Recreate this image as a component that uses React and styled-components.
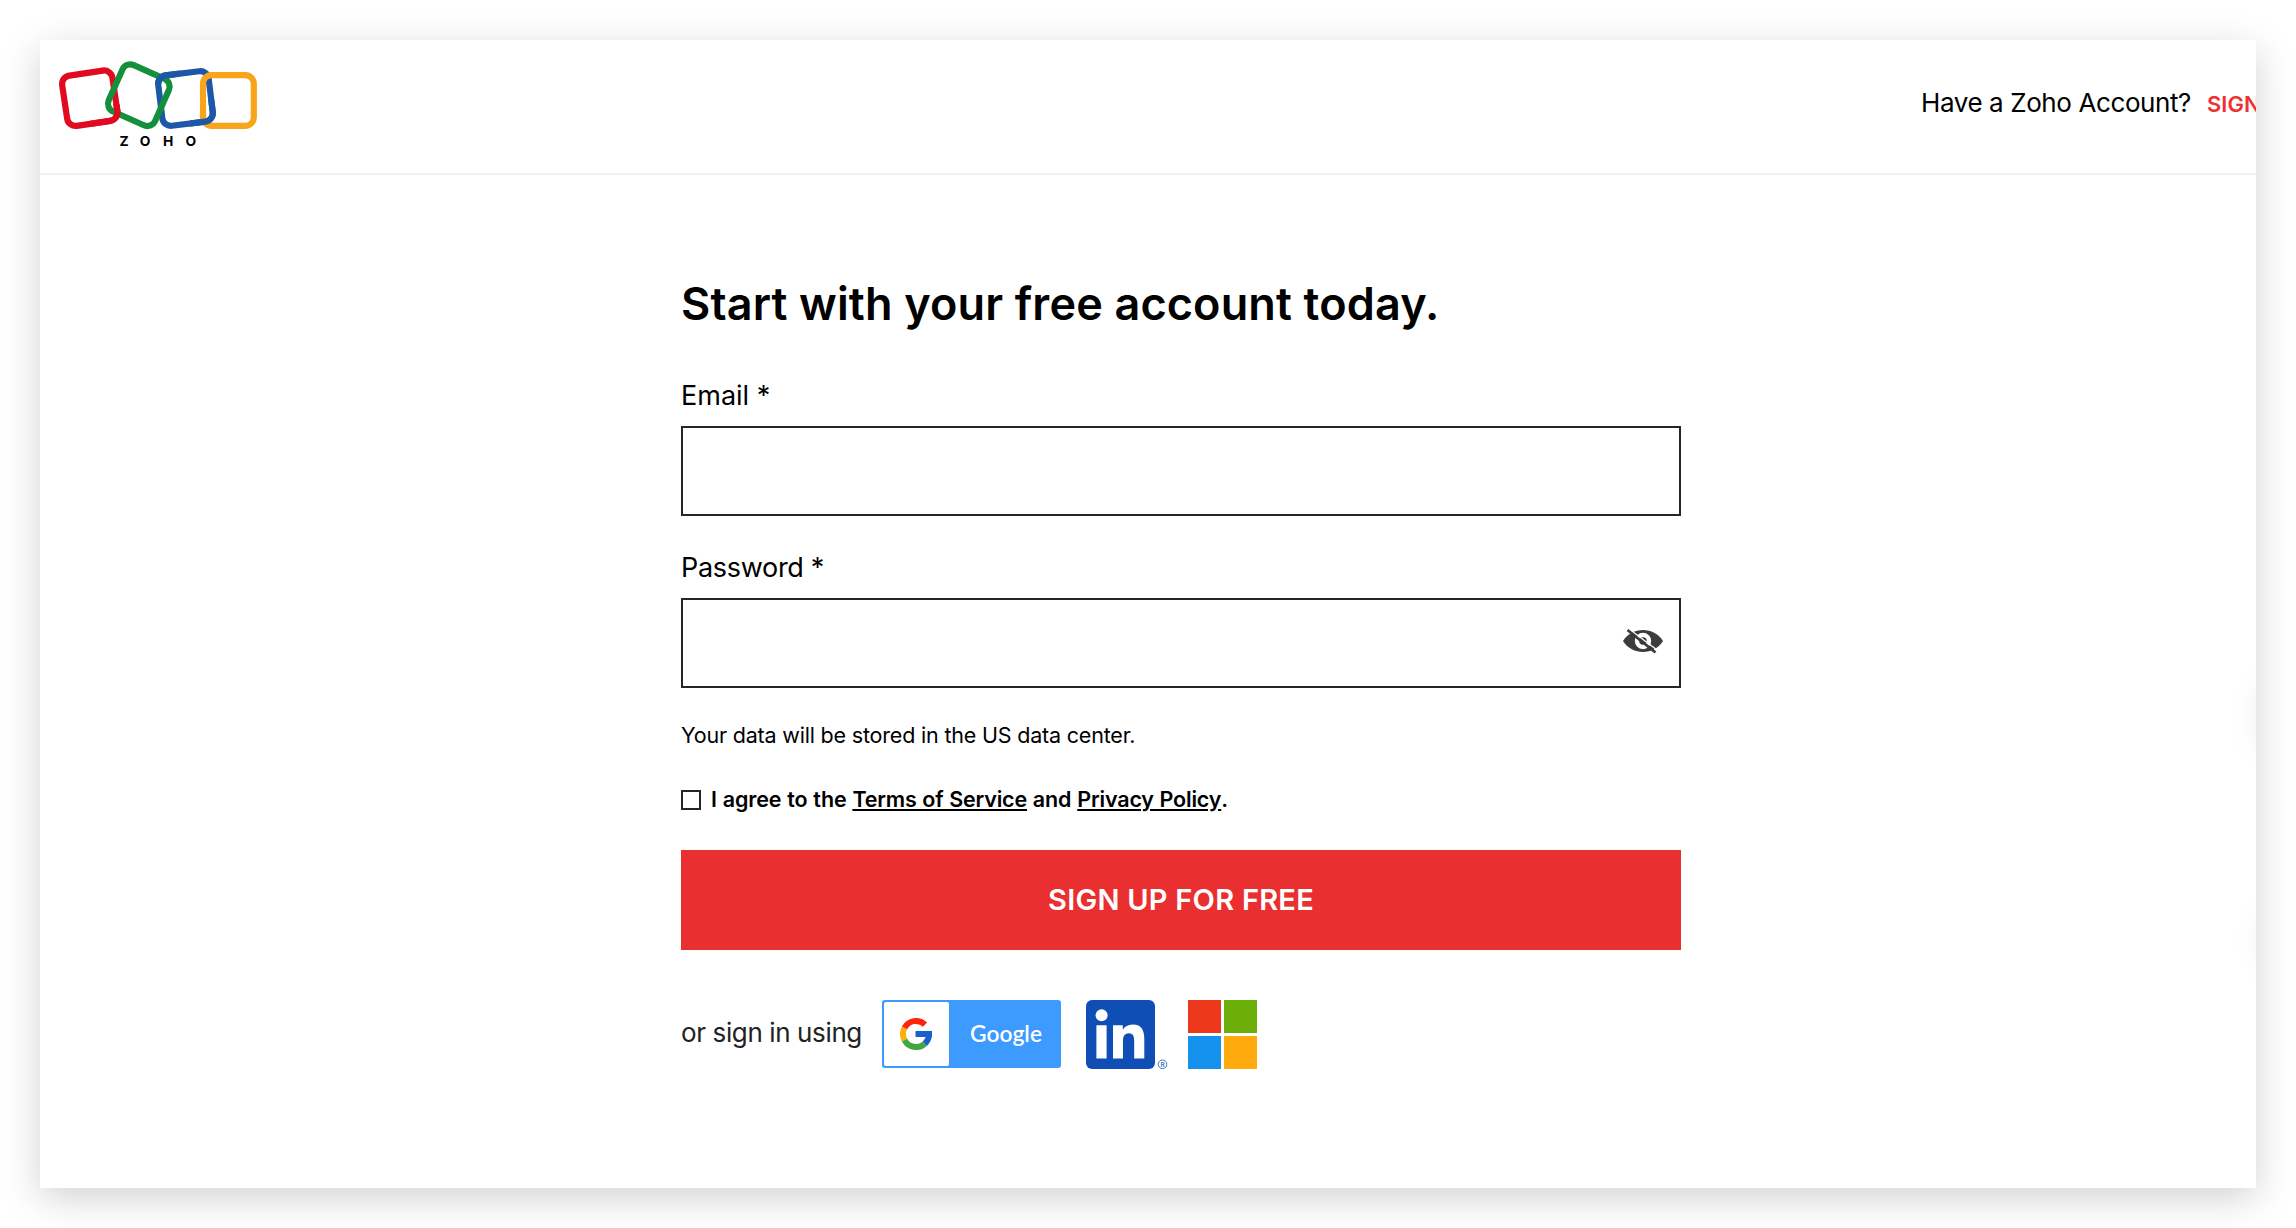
import React from 'react';
import styled, { createGlobalStyle } from 'styled-components';

const GlobalStyle = createGlobalStyle`
  * {
    box-sizing: border-box;
  }
  body {
    margin: 0;
    background-color: #fff;
    color: #000;
    font-family: Inter, 'Liberation Sans', sans-serif;
  }
`;

const Page = styled.div`
  height: 1228px;
  padding: 40px;
  overflow: hidden;
`;

const Window = styled.div`
  position: relative;
  height: 1148px;
  background-color: #fff;
  box-shadow: 0 10px 36px rgba(0, 0, 0, 0.18);
`;

const Header = styled.header`
  display: flex;
  justify-content: space-between;
  height: 135px;
  padding-left: 20px;
  border-bottom: 2px solid #f2f2f2;
`;

const Logo = styled.svg`
  display: block;
  width: 200px;
  height: 90px;
  margin-top: 20px;
  overflow: visible;
`;

const LogoText = styled.text`
  font-size: 13.8px;
  font-weight: 700;
`;

const AccountNav = styled.div`
  display: flex;
  align-items: baseline;
  width: 335px;
  height: 80px;
  padding-top: 45px;
  overflow: hidden;
  white-space: nowrap;
`;

const AccountText = styled.span`
  flex: none;
  font-size: 26px;
  line-height: 36px;
  letter-spacing: -0.4px;
`;

const SignInLink = styled.a`
  flex: none;
  margin-left: 16px;
  color: #ee3131;
  font-size: 22px;
  font-weight: 600;
`;

const Form = styled.form`
  display: flex;
  flex-direction: column;
  width: 1000px;
  margin: 99px 0 0 641px;
`;

const Title = styled.h1`
  margin: 0 0 44px;
  font-size: 45px;
  font-weight: 600;
  line-height: 60px;
  letter-spacing: 0.15px;
`;

const Label = styled.label`
  margin-bottom: 12px;
  font-size: 27px;
  line-height: 36px;
  letter-spacing: ${(props) => props.$spacing || '0'};
`;

const Field = styled.div`
  display: flex;
  align-items: center;
  height: 90px;
  margin-bottom: ${(props) => props.$gap};
  padding-right: 16px;
  border: 2px solid #262628;
`;

const Input = styled.input`
  flex: 1;
  height: 100%;
  padding: 0 20px;
  border: none;
  outline: none;
  background: transparent;
  font: inherit;
  font-size: 27px;
`;

const EyeIcon = styled.svg`
  flex: none;
  width: 40px;
  height: 26px;
  margin-bottom: 4px;
`;

const Notice = styled.p`
  margin: 0 0 34px;
  font-size: 21.5px;
  line-height: 30px;
  letter-spacing: -0.19px;
`;

const Agreement = styled.label`
  display: flex;
  margin-bottom: 36px;
  font-size: 21.5px;
  font-weight: 600;
  line-height: 30px;
  letter-spacing: -0.1px;
  word-spacing: 0.5px;
`;

const Checkbox = styled.input`
  appearance: none;
  width: 20px;
  height: 20px;
  margin: 6px 10px 0 0;
  border: 2px solid #262628;
`;

const TermsLink = styled.a`
  letter-spacing: -0.18px;
  text-decoration: underline;
  text-decoration-thickness: 2px;
  text-underline-offset: 2px;
`;

const SubmitButton = styled.button`
  height: 100px;
  margin-bottom: 50px;
  padding: 0 0 2px;
  border: none;
  background-color: #ea2f31;
  color: #fff;
  font-family: inherit;
  font-size: 29px;
  font-weight: 600;
  letter-spacing: 0.25px;
  cursor: pointer;
`;

const Social = styled.div`
  display: flex;
  align-items: flex-start;
`;

const SocialText = styled.span`
  width: 201px;
  margin-top: 18px;
  color: #222;
  font-size: 26px;
  line-height: 30px;
  letter-spacing: -0.38px;
`;

const GoogleButton = styled.a`
  display: flex;
  width: 179px;
  height: 68px;
  margin-right: 24.5px;
  padding: 2px 0 2px 2px;
  border-radius: 3px;
  background-color: #3d9bff;
`;

const GoogleMark = styled.span`
  display: flex;
  align-items: center;
  justify-content: center;
  width: 65px;
  padding-right: 2px;
  border-radius: 2px;
  background-color: #fff;
`;

const GoogleText = styled.span`
  flex: 1;
  padding-left: 21px;
  color: #fff;
  font-family: Lato, sans-serif;
  font-size: 22.8px;
  font-weight: 600;
  line-height: 62px;
`;

const LinkedInIcon = styled.svg`
  width: 82px;
  height: 70px;
  margin-right: 20.5px;
`;

const MicrosoftIcon = styled.div`
  display: grid;
  grid-template-columns: 33px 33px;
  grid-auto-rows: 33px;
  gap: 3px;
`;

const Tile = styled.span`
  background-color: ${(props) => props.$color};
`;

// soft glow of the floating buttons that sit past the right edge
const Glow = styled.div`
  position: absolute;
  right: 0;
  top: ${(props) => props.$top};
  width: 40px;
  height: 150px;
  background: radial-gradient(
    circle at ${(props) => props.$x} 50%,
    rgba(0, 0, 0, 0.028) ${(props) => props.$r}px,
    rgba(0, 0, 0, 0.009) ${(props) => props.$r + 13}px,
    rgba(0, 0, 0, 0) ${(props) => props.$r + 28}px
  );
`;

const Ring = ({ x, y, angle, color, clip }) => (
  <g clipPath={clip}>
    <rect
      x={x - 25.4}
      y={y - 25.4}
      width="50.8"
      height="50.8"
      rx="8.5"
      transform={`rotate(${angle} ${x} ${y})`}
      fill="none"
      stroke={color}
      strokeWidth="6.2"
    />
  </g>
);

const red = { x: 89.8, y: 98.2, angle: -8.5, color: '#e00b20' };
const green = { x: 138.8, y: 95.2, angle: 24, color: '#148f3b' };
const blue = { x: 185.5, y: 98.5, angle: -7, color: '#1c57a8' };
const yellow = { x: 228.4, y: 100.5, angle: 0, color: '#f8a51b' };

const ZohoLogo = () => (
  <Logo viewBox="60 60 200 90">
    <defs>
      <clipPath id="redFront">
        <rect x="90" y="104" width="50" height="40" />
      </clipPath>
      <clipPath id="blueFront">
        <rect x="150" y="60" width="30" height="24" />
        <rect x="190" y="100" width="40" height="40" />
      </clipPath>
    </defs>
    <Ring {...red} />
    <Ring {...blue} />
    <Ring {...green} />
    <Ring {...yellow} />
    <Ring {...red} clip="url(#redFront)" />
    <Ring {...blue} clip="url(#blueFront)" />
    <LogoText x="119.5 139.7 163 185.4" y="146">
      ZOHO
    </LogoText>
  </Logo>
);

const GoogleG = () => (
  <svg width="32" height="32" viewBox="0 0 32 32" fill="none" strokeWidth="6">
    <path d="M4.52 22.1A13 13 0 0 1 4.52 9.9" stroke="#fbb30b" />
    <path d="M4.52 9.9A13 13 0 0 1 25.03 6.65" stroke="#ff2408" />
    <path d="M24.7 25.66A13 13 0 0 1 4.52 22.1" stroke="#43a640" />
    <path d="M29 15A13 13 0 0 1 24.7 25.66" stroke="#195fca" />
    <path d="M15.5 16H32" stroke="#195fca" />
  </svg>
);

const HiddenEye = () => (
  <EyeIcon viewBox="0 0 40 26">
    <path d="M0 13C5 5.5 12 2 20 2s15 3.5 20 11c-5 7.5-12 11-20 11S5 20.5 0 13z" fill="#3c3c3e" />
    <circle cx="20" cy="13" r="8.2" fill="#fff" />
    <circle cx="20" cy="13" r="3.8" fill="#3c3c3e" />
    <path d="M6 1L34.5 22.2" stroke="#fff" strokeWidth="1.4" />
    <path d="M4.5 2L32.5 24.5" stroke="#3c3c3e" strokeWidth="2.8" />
  </EyeIcon>
);

const App = () => {
  return (
    <Page>
      <GlobalStyle />
      <Window>
        <Header>
          <ZohoLogo />
          <AccountNav>
            <AccountText>Have a Zoho Account?</AccountText>
            <SignInLink>SIGN IN</SignInLink>
          </AccountNav>
        </Header>
        <Form>
          <Title>Start with your free account today.</Title>
          <Label htmlFor="email">Email *</Label>
          <Field $gap="34px">
            <Input id="email" type="email" />
          </Field>
          <Label htmlFor="password" $spacing="-0.3px">Password *</Label>
          <Field $gap="32px">
            <Input id="password" type="password" />
            <HiddenEye />
          </Field>
          <Notice>Your data will be stored in the US data center.</Notice>
          <Agreement>
            <Checkbox type="checkbox" />
            <span>
              I agree to the <TermsLink>Terms of Service</TermsLink> and{' '}
              <TermsLink>Privacy Policy</TermsLink>.
            </span>
          </Agreement>
          <SubmitButton type="button">SIGN UP FOR FREE</SubmitButton>
          <Social>
            <SocialText>or sign in using</SocialText>
            <GoogleButton>
              <GoogleMark>
                <GoogleG />
              </GoogleMark>
              <GoogleText>Google</GoogleText>
            </GoogleButton>
            <LinkedInIcon viewBox="0 0 82 70">
              <rect width="69" height="69" rx="6" fill="#0f4fb5" />
              <circle cx="15.6" cy="15.3" r="6" fill="#fff" />
              <path
                d="M10.4 25.3h10.2v33.2H10.4zM27 25.3h9.8v4.5c1.8-3.2 5.2-5.3 9.8-5.3 9.6 0 11.7 6.3 11.7 14.8v19.2H48.2v-17c0-4.3-.5-8.2-5.3-8.2-4.9 0-5.9 3.7-5.9 8v17.2H27z"
                fill="#fff"
              />
              <circle cx="76.5" cy="64.3" r="4.3" fill="none" stroke="#3f73c6" />
              <text x="74.4" y="66.7" fontSize="6.5" fontWeight="600" fill="#3f73c6">
                R
              </text>
            </LinkedInIcon>
            <MicrosoftIcon>
              <Tile $color="#ee381b" />
              <Tile $color="#6cae08" />
              <Tile $color="#1592ee" />
              <Tile $color="#ffab0d" />
            </MicrosoftIcon>
          </Social>
        </Form>
        <Glow $top="602px" $x="80px" $r={42} />
        <Glow $top="825px" $x="74px" $r={30} />
      </Window>
    </Page>
  );
};

export default App;
